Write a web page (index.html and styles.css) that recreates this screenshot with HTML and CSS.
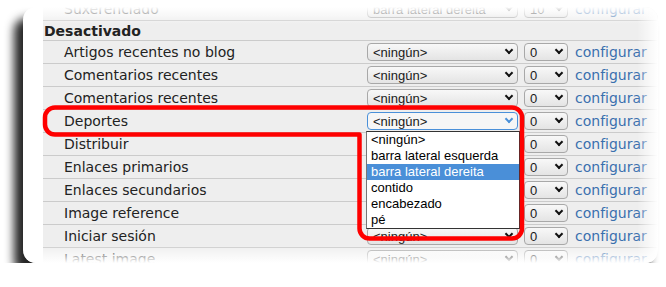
FILE: index.html
```html
<!DOCTYPE html>
<html lang="gl">
<head>
    <meta charset="UTF-8">
    <title>Bloques</title>
    <link rel="stylesheet" href="styles.css">
</head>
<body>
    <div class="frame">
        <div class="blocks">
            <div class="row">
                <span class="label">Suxerenciado</span>
                <div class="select region">barra lateral dereita</div>
                <div class="select weight">10</div>
                <a class="configure" href="#">configurar</a>
            </div>
            <div class="row region-title">Desactivado</div>
            <div class="row">
                <span class="label">Artigos recentes no blog</span>
                <div class="select region">&lt;ningún&gt;</div>
                <div class="select weight">0</div>
                <a class="configure" href="#">configurar</a>
            </div>
            <div class="row">
                <span class="label">Comentarios recentes</span>
                <div class="select region">&lt;ningún&gt;</div>
                <div class="select weight">0</div>
                <a class="configure" href="#">configurar</a>
            </div>
            <div class="row">
                <span class="label">Comentarios recentes</span>
                <div class="select region">&lt;ningún&gt;</div>
                <div class="select weight">0</div>
                <a class="configure" href="#">configurar</a>
            </div>
            <div class="row">
                <span class="label">Deportes</span>
                <div class="select region focus">&lt;ningún&gt;
                    <ul class="listbox">
                        <li>&lt;ningún&gt;</li>
                        <li>barra lateral esquerda</li>
                        <li class="selected">barra lateral dereita</li>
                        <li>contido</li>
                        <li>encabezado</li>
                        <li>pé</li>
                    </ul>
                </div>
                <div class="select weight">0</div>
                <a class="configure" href="#">configurar</a>
            </div>
            <div class="row">
                <span class="label">Distribuir</span>
                <div class="select region">&lt;ningún&gt;</div>
                <div class="select weight">0</div>
                <a class="configure" href="#">configurar</a>
            </div>
            <div class="row">
                <span class="label">Enlaces primarios</span>
                <div class="select region">&lt;ningún&gt;</div>
                <div class="select weight">0</div>
                <a class="configure" href="#">configurar</a>
            </div>
            <div class="row">
                <span class="label">Enlaces secundarios</span>
                <div class="select region">&lt;ningún&gt;</div>
                <div class="select weight">0</div>
                <a class="configure" href="#">configurar</a>
            </div>
            <div class="row">
                <span class="label">Image reference</span>
                <div class="select region">&lt;ningún&gt;</div>
                <div class="select weight">0</div>
                <a class="configure" href="#">configurar</a>
            </div>
            <div class="row">
                <span class="label">Iniciar sesión</span>
                <div class="select region">&lt;ningún&gt;</div>
                <div class="select weight">0</div>
                <a class="configure" href="#">configurar</a>
            </div>
            <div class="row">
                <span class="label">Latest image</span>
                <div class="select region">&lt;ningún&gt;</div>
                <div class="select weight">0</div>
                <a class="configure" href="#">configurar</a>
            </div>
        </div>
    </div>

    <!-- red marker drawn round the open dropdown -->
    <svg class="marker" width="666" height="287" viewBox="0 0 666 287">
        <path d="M55 107.5 H512 A10 10 0 0 1 522 117.5 V228.5 A10 10 0 0 1 512 238.5 H369.5 A10 10 0 0 1 359.5 228.5 V134.5 H55 A10 10 0 0 1 45 124.5 V117.5 A10 10 0 0 1 55 107.5 Z"
              fill="none" stroke="#f00" stroke-width="4.5" stroke-linejoin="round"/>
    </svg>
</body>
</html>
```

FILE: styles.css
```css
body { margin: 0; padding: 7px 0 0 23px; background: #fff; font-family: "DejaVu Sans", Verdana, sans-serif; color: #222; position: relative; }

.frame { position: relative; width: 635px; height: 256px; background: #fff; border-radius: 13px; overflow: hidden; box-shadow: -9px 11px 10px rgba(0, 0, 0, 0.85); }
.frame::before { content: ""; position: absolute; inset: 0; z-index: 2; pointer-events: none; background: linear-gradient(to bottom, #fff 0, rgba(255, 255, 255, 0.6) 8px, rgba(255, 255, 255, 0) 17px, rgba(255, 255, 255, 0) 238px, #fff 256px); }
.frame::after { content: ""; position: absolute; inset: 0; z-index: 2; pointer-events: none; background: linear-gradient(to right, rgba(255, 255, 255, 0) 614px, #fff 635px); }

.blocks { margin: -9px 0 0 20px; }
.row { display: flex; align-items: center; height: 22px; border-bottom: 1px solid #cbcbcb; background: #eee; font-size: 14px; white-space: nowrap; }
.region-title { height: 19px; padding-left: 1px; font-weight: bold; }
.label { flex: 0 0 324px; box-sizing: border-box; padding-left: 21px; }

.select { display: flex; align-items: center; justify-content: space-between; box-sizing: border-box; height: 18px; padding: 0 4px 0 5px; border: 1px solid #a8a8a8; border-radius: 4px; background: linear-gradient(#f8f8f8, #e4e4e4); font: 13px "Liberation Sans", Arial, sans-serif; color: #1a1a1a; }
.select::after { content: ""; width: 4px; height: 4px; border-right: 2px solid #111; border-bottom: 2px solid #111; transform: rotate(45deg); margin: -4px 1px 0 0; }
.region { width: 151px; margin-right: 6px; }
.weight { width: 44px; margin-right: 7px; }
.select.focus { position: relative; border-color: #4a90d9; background: #f6f6f6; }
.select.focus::after { border-color: #4a90d9; }

.listbox { position: absolute; top: 18px; left: -2px; z-index: 1; width: 154px; box-sizing: border-box; margin: 0; padding: 0; list-style: none; background: #fff; border: 1px solid #333; border-left-color: #777; }
.listbox li { height: 16px; line-height: 16px; padding-left: 4px; color: #000; }
.listbox .selected { background: #4a8fd8; color: #fff; }

.configure { color: #3a70ae; text-decoration: none; }

.marker { position: absolute; top: 0; left: 0; z-index: 3; pointer-events: none; }
```
